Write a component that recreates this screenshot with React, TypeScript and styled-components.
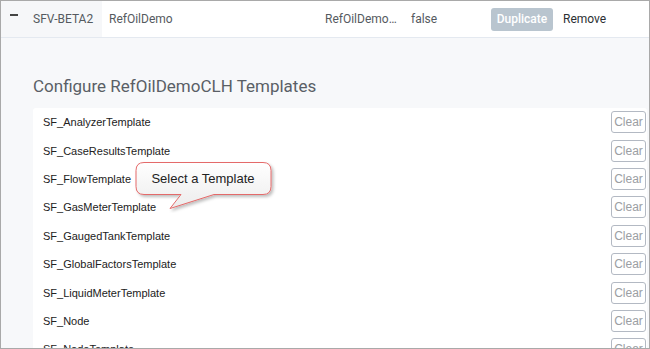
import styled, { createGlobalStyle } from 'styled-components';

const GlobalStyle = createGlobalStyle`
	html, body {
		margin: 0;
		padding: 0;
		background: #ffffff;
	}
	* {
		box-sizing: border-box;
	}
`;

const Frame = styled.div`
	position: relative;
	width: 650px;
	height: 349px;
	border: 1px solid #a9a9a9;
	overflow: hidden;
	display: flex;
	flex-direction: column;
	font-family: Roboto, 'Liberation Sans', sans-serif;
`;

const TopRow = styled.div`
	display: flex;
	align-items: center;
	height: 37px;
	flex-shrink: 0;
	background: #ffffff;
	border-bottom: 1px solid #e4e9f0;
	font-size: 12px;
	color: #555a60;
`;

const ToggleCell = styled.div`
	display: flex;
	align-items: center;
	align-self: stretch;
	width: 101px;
	background: #f6f7f9;
	padding-left: 9px;
`;

const Minus = styled.span`
	display: block;
	width: 8px;
	height: 2px;
	background: #444;
	margin-right: 15px;
	margin-top: -9px;
`;

const Cell = styled.div<{ $w: number }>`
	width: ${(p) => p.$w}px;
	padding-left: 7px;
	white-space: nowrap;
	overflow: hidden;
	text-overflow: ellipsis;
`;

const DuplicateButton = styled.button`
	height: 23px;
	width: 62px;
	margin-left: 7px;
	border: none;
	border-radius: 3px;
	background: #b9c5cf;
	color: #ffffff;
	font-family: Roboto, 'Liberation Sans', sans-serif;
	font-size: 12px;
	font-weight: 500;
	padding: 0;
`;

const RemoveLink = styled.span`
	margin-left: 10px;
	color: #2b2f33;
`;

const Main = styled.div`
	flex: 1;
	background: #f7f8fa;
	padding: 0 2px 0 32px;
	overflow: hidden;
`;

const Heading = styled.h2`
	margin: 0;
	padding-top: 36px;
	height: 70px;
	font-size: 17px;
	font-weight: 400;
	color: #5a5f66;
	line-height: 24px;
`;

const Panel = styled.div`
	background: #ffffff;
	border-radius: 3px 3px 0 0;
	padding: 0 1px 0 10px;
`;

const TemplateRow = styled.div`
	display: flex;
	align-items: center;
	justify-content: space-between;
	height: 28.4px;
	font-family: 'Liberation Sans', Arial, sans-serif;
	font-size: 11px;
	color: #222;
`;

const ClearButton = styled.button`
	width: 35px;
	height: 22px;
	padding: 0;
	border: 1px solid #b3b9c3;
	border-radius: 3px;
	background: #ffffff;
	color: #9b9ea3;
	font-family: 'Liberation Sans', Arial, sans-serif;
	font-size: 12px;
`;

const Callout = styled.div`
	position: absolute;
	left: 132px;
	top: 158px;
	width: 145px;
	height: 54px;
`;

const CalloutText = styled.span`
	position: absolute;
	left: 0;
	top: 3px;
	width: 140px;
	height: 32px;
	display: flex;
	align-items: center;
	justify-content: center;
	font-family: 'Liberation Sans', Arial, sans-serif;
	font-size: 13px;
	color: #222;
`;

const templates = [
	'SF_AnalyzerTemplate',
	'SF_CaseResultsTemplate',
	'SF_FlowTemplate',
	'SF_GasMeterTemplate',
	'SF_GaugedTankTemplate',
	'SF_GlobalFactorsTemplate',
	'SF_LiquidMeterTemplate',
	'SF_Node',
	'SF_NodeTemplate',
];

function SelectCallout() {
	return (
		<Callout>
			<svg width='145' height='54' viewBox='0 0 145 54'>
				<defs>
					<linearGradient id='bubble' x1='0' y1='0' x2='0' y2='1'>
						<stop offset='0' stopColor='#ffffff' />
						<stop offset='1' stopColor='#ececec' />
					</linearGradient>
					<filter id='shade' x='-10%' y='-10%' width='130%' height='140%'>
						<feDropShadow dx='2' dy='2' stdDeviation='1.5' floodColor='#000' floodOpacity='0.25' />
					</filter>
				</defs>
				<path
					d='M11 3.5 H130 Q138 3.5 138 11.5 V27.5 Q138 35.5 130 35.5 H81 L37 49.5 L48 35.5 H11 Q3 35.5 3 27.5 V11.5 Q3 3.5 11 3.5 Z'
					fill='url(#bubble)'
					stroke='#e46a6a'
					strokeWidth='1'
					filter='url(#shade)'
				/>
			</svg>
			<CalloutText>Select a Template</CalloutText>
		</Callout>
	);
}

export default function App() {
	return (
		<>
			<GlobalStyle />
			<Frame>
				<TopRow>
					<ToggleCell>
						<Minus />
						SFV-BETA2
					</ToggleCell>
					<Cell $w={216}>RefOilDemo</Cell>
					<Cell $w={86}>RefOilDemoCLH</Cell>
					<Cell $w={80}>false</Cell>
					<DuplicateButton>Duplicate</DuplicateButton>
					<RemoveLink>Remove</RemoveLink>
				</TopRow>
				<Main>
					<Heading>Configure RefOilDemoCLH Templates</Heading>
					<Panel>
						{templates.map((t) => (
							<TemplateRow key={t}>
								<span>{t}</span>
								<ClearButton>Clear</ClearButton>
							</TemplateRow>
						))}
					</Panel>
				</Main>
				<SelectCallout />
			</Frame>
		</>
	);
}
